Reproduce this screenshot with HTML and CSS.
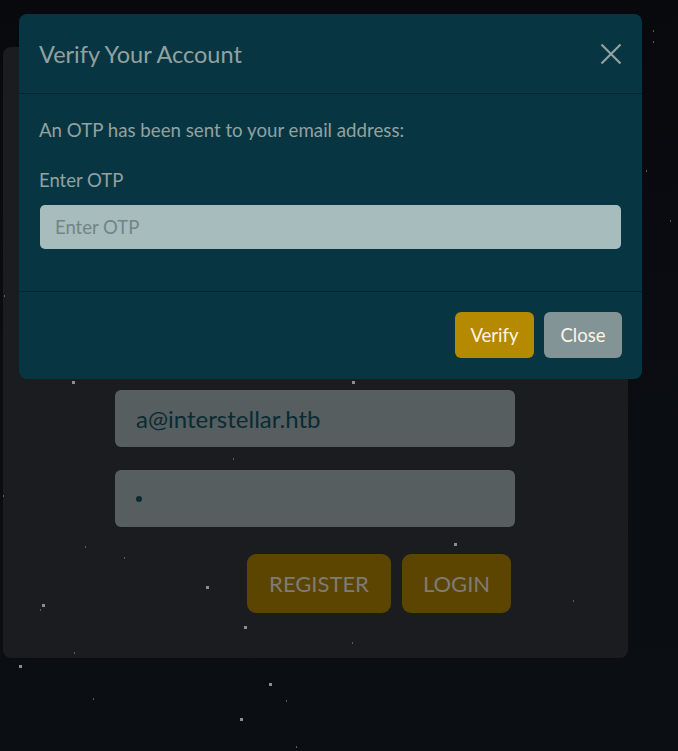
FILE: index.html
```html
<!DOCTYPE html>
<html>
<head>
<meta charset="utf-8">
<link rel="stylesheet" href="styles.css">
</head>
<body>
<div class="page">
  <svg class="stars" width="678" height="751" viewBox="0 0 678 751">
    <g fill="#8a8d91">
      <rect x="72" y="381" width="3" height="3"/>
      <rect x="352" y="381" width="3" height="3"/>
      <rect x="454" y="543" width="3" height="3"/>
      <rect x="206" y="586" width="3" height="3"/>
      <rect x="42" y="604" width="3" height="3"/>
      <rect x="244" y="626" width="3" height="3"/>
      <rect x="19" y="665" width="3" height="3"/>
      <rect x="269" y="683" width="3" height="3"/>
      <rect x="240" y="718" width="3" height="3"/>
    </g>
    <g fill="#5a5d62">
      <rect x="233" y="458" width="1" height="2"/>
      <rect x="380" y="497" width="1" height="2"/>
      <rect x="85" y="546" width="1" height="2"/>
      <rect x="124" y="557" width="1" height="2"/>
      <rect x="40" y="609" width="1" height="2"/>
      <rect x="573" y="600" width="1" height="2"/>
      <rect x="352" y="642" width="1" height="2"/>
      <rect x="74" y="652" width="1" height="2"/>
      <rect x="93" y="698" width="1" height="2"/>
      <rect x="286" y="700" width="1" height="2"/>
      <rect x="296" y="746" width="1" height="2"/>
      <rect x="653" y="30" width="1" height="2"/>
      <rect x="653" y="41" width="1" height="2"/>
      <rect x="646" y="170" width="1" height="2"/>
      <rect x="670" y="220" width="1" height="2"/>
      <rect x="4" y="295" width="1" height="2"/>
      <rect x="3" y="495" width="1" height="2"/>
    </g>
  </svg>

  <main class="card">
    <form class="login">
      <div class="field">a@interstellar.htb</div>
      <div class="field"><span class="dot"></span></div>
      <div class="actions">
        <span class="btn-bg btn-register">REGISTER</span>
        <span class="btn-bg btn-login">LOGIN</span>
      </div>
    </form>
  </main>

  <section class="modal">
    <header class="modal-header">
      <h5 class="modal-title">Verify Your Account</h5>
      <svg class="close-x" width="22" height="22" viewBox="0 0 22 22">
        <path d="M1.5 1.5 L20.5 20.5 M20.5 1.5 L1.5 20.5" stroke="#93a1a1" stroke-width="2.2" stroke-linecap="butt"/>
      </svg>
    </header>
    <div class="modal-body">
      <p class="msg">An OTP has been sent to your email address:</p>
      <label class="label">Enter OTP</label>
      <div class="otp-input">Enter OTP</div>
    </div>
    <footer class="modal-footer">
      <span class="btn btn-verify">Verify</span>
      <span class="btn btn-close">Close</span>
    </footer>
  </section>
</div>
</body>
</html>
```

FILE: styles.css
```css
* { box-sizing: border-box; }
html, body {
  margin: 0;
  padding: 0;
  width: 678px;
  height: 751px;
  overflow: hidden;
}
body {
  background: #080b10;
  font-family: "Lato", "Noto Sans", sans-serif;
}
.page {
  position: relative;
  width: 678px;
  height: 751px;
  padding-top: 47px;
  padding-left: 3px;
  background: linear-gradient(180deg, #07090d 0%, #0a0d12 60%, #0b0e13 100%);
}
.stars {
  position: absolute;
  left: 0;
  top: 0;
  z-index: 2;
}
.card {
  width: 625px;
  height: 611px;
  background: #1a1c20;
  border-radius: 8px;
  padding: 343px 0 0 112px;
}
.login {
  width: 400px;
  display: flex;
  flex-direction: column;
  gap: 23px;
  margin: 0;
}
.field {
  height: 57px;
  background: #565e5f;
  border-radius: 6px;
  color: #0a2b33;
  font-size: 24px;
  display: flex;
  align-items: center;
  padding-left: 21px;
}
.dot {
  width: 6px;
  height: 6px;
  border-radius: 50%;
  background: #0a2b33;
}
.actions {
  display: flex;
  justify-content: flex-end;
  gap: 11px;
  padding-right: 4px;
  margin-top: 4px;
}
.btn-bg {
  height: 59px;
  background: #5c4500;
  color: #7e7c76;
  border-radius: 9px;
  font-size: 22px;
  display: flex;
  align-items: center;
  justify-content: center;
}
.btn-register { width: 144px; }
.btn-login { width: 109px; }
.modal {
  position: absolute;
  left: 19px;
  top: 14px;
  width: 623px;
  height: 365px;
  background: #073642;
  border-radius: 8px;
  z-index: 3;
  color: #93a1a1;
  display: flex;
  flex-direction: column;
}
.modal-header {
  height: 80px;
  border-bottom: 1px solid #03262f;
  display: flex;
  align-items: center;
  justify-content: space-between;
  padding: 0 20px 0 20px;
}
.modal-title {
  margin: 0;
  font-weight: 400;
  font-size: 23.5px;
  color: #93a1a1;
}
.close-x { display: block; margin-top: 0; }
.modal-body {
  height: 198px;
  border-bottom: 1px solid #03262f;
  padding: 23px 20px 0 20px;
}
.msg {
  margin: 0;
  font-size: 18.7px;
  line-height: 26px;
}
.label {
  display: block;
  margin-top: 24px;
  font-size: 18.5px;
  line-height: 26px;
}
.otp-input {
  margin-top: 12px;
  margin-left: 1px;
  height: 44px;
  width: 581px;
  background: #a7bcbc;
  border-radius: 5px;
  color: #6f8587;
  font-size: 18.5px;
  display: flex;
  align-items: center;
  padding-left: 15px;
}
.modal-footer {
  flex: 1;
  display: flex;
  justify-content: flex-end;
  align-items: flex-start;
  gap: 10px;
  padding: 20px 20px 0 0;
}
.btn {
  height: 46px;
  border-radius: 6px;
  font-size: 18.5px;
  color: #fdf6e3;
  display: flex;
  align-items: center;
  justify-content: center;
}
.btn-verify { width: 79px; background: #b58900; }
.btn-close { width: 78px; background: #839496; }
```
